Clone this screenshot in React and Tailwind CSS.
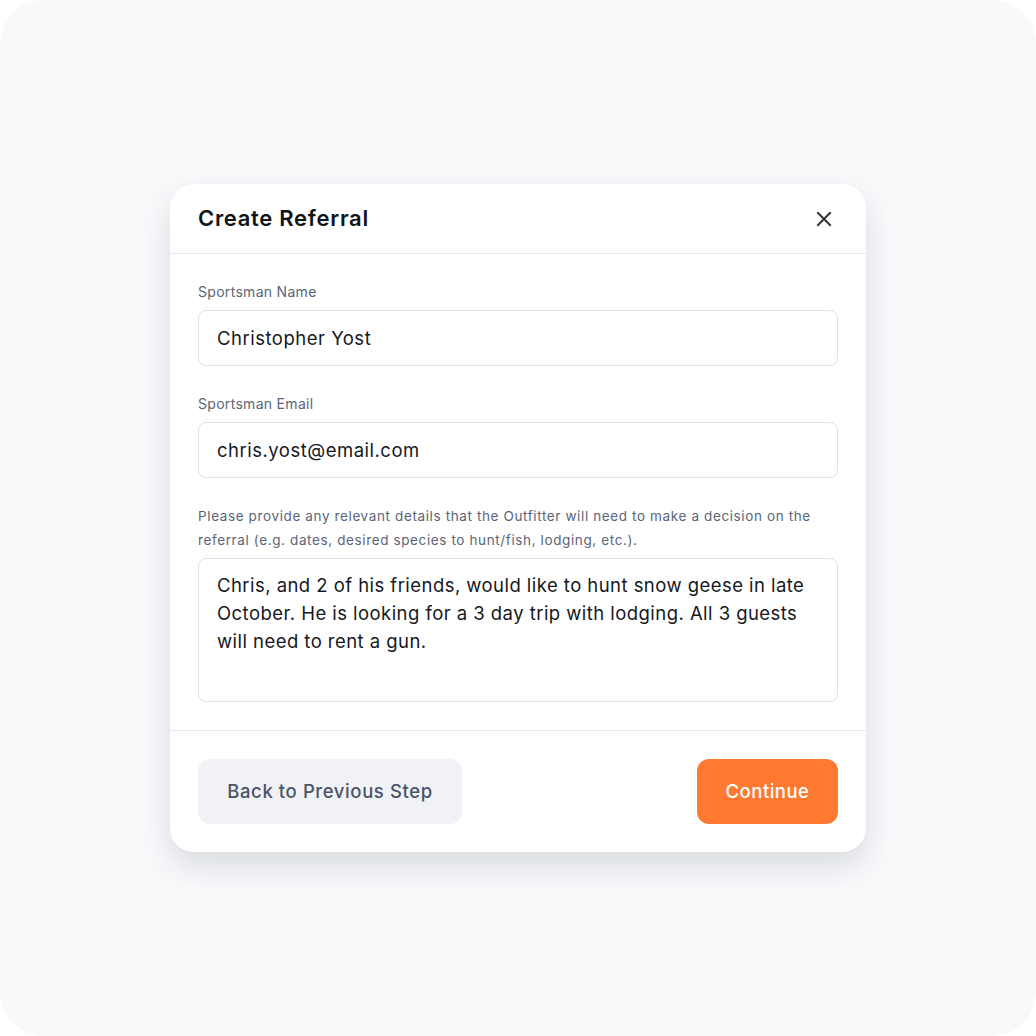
export default function App() {
  return (
    <div className="min-h-screen bg-white" style={{ fontFamily: "Inter, 'Open Sans', sans-serif" }}>
      <div className="h-[1036px] w-[1036px] rounded-[44px] bg-[#f8f9fb] flex items-center justify-center">
        <div className="w-[696px] bg-white rounded-[24px] shadow-[0_14px_30px_rgba(30,40,60,0.14)]">
          {/* header */}
          <div className="h-[70px] px-[28px] flex items-center justify-between border-b border-[#e4e7ee]">
            <h2 className="text-[22px] font-semibold text-[#111418] tracking-[0.7px]">Create Referral</h2>
            <button className="w-[16px] h-[16px] mr-[6px] flex items-center justify-center text-[#333]">
              <svg width="16" height="16" viewBox="0 0 16 16" fill="none" stroke="currentColor" strokeWidth="2" strokeLinecap="square">
                <path d="M2 2L14 14M14 2L2 14" />
              </svg>
            </button>
          </div>

          {/* body */}
          <div className="px-[28px] pt-[28px] pb-[28px] border-b border-[#e4e7ee]">
            <label className="block text-[14px] leading-[20px] tracking-[0.3px] text-[#5b6577] mb-[8px]">Sportsman Name</label>
            <input
              defaultValue="Christopher Yost"
              className="w-full h-[56px] px-[18px] rounded-[8px] border border-[#dfe3eb] text-[18.5px] tracking-[0.5px] text-[#16181d] outline-none"
            />

            <label className="block mt-[28px] text-[14px] leading-[20px] tracking-[0.3px] text-[#5b6577] mb-[8px]">Sportsman Email</label>
            <input
              defaultValue="chris.yost@email.com"
              className="w-full h-[56px] px-[18px] rounded-[8px] border border-[#dfe3eb] text-[18.5px] tracking-[0.5px] text-[#16181d] outline-none"
            />

            <p className="mt-[26px] text-[13.5px] leading-[24px] tracking-[0.62px] text-[#5b6577] pr-[20px]">
              Please provide any relevant details that the Outfitter will need to make a decision on the referral (e.g.
              dates, desired species to hunt/fish, lodging, etc.).
            </p>
            <textarea
              readOnly
              defaultValue="Chris, and 2 of his friends, would like to hunt snow geese in late October. He is looking for a 3 day trip with lodging. All 3 guests will need to rent a gun."
              className="mt-[6px] block w-full h-[144px] px-[18px] pt-[12px] pb-[13px] rounded-[8px] border border-[#dfe3eb] text-[18.5px] leading-[28px] tracking-[0.45px] text-[#16181d] resize-none outline-none"
            />
          </div>

          {/* footer */}
          <div className="px-[28px] pt-[28px] pb-[28px] flex items-center justify-between">
            <button className="h-[65px] w-[264px] rounded-[12px] bg-[#f0f2f6] text-[18.5px] font-medium tracking-[0.6px] text-[#4a5468]">
              Back to Previous Step
            </button>
            <button className="h-[65px] w-[141px] rounded-[12px] bg-[#ff7a30] text-[18.5px] font-medium tracking-[0.5px] text-white">
              Continue
            </button>
          </div>
        </div>
      </div>
    </div>
  );
}
